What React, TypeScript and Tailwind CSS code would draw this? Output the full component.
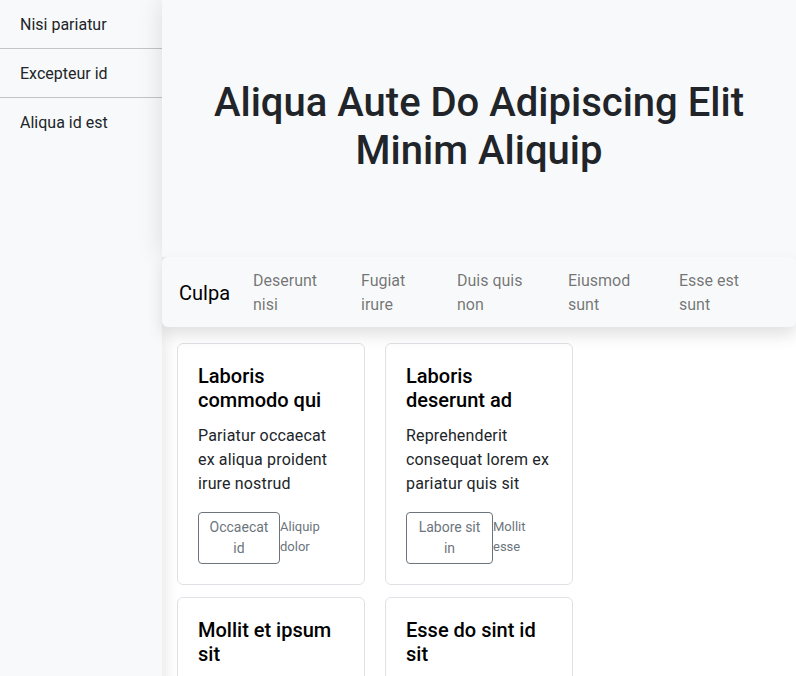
import { useState } from 'react'

const sideLinks = ['Nisi pariatur', 'Excepteur id', 'Aliqua id est']

const navLinks = [
  { label: 'Deserunt nisi', w: 'w-[108px]' },
  { label: 'Fugiat irure', w: 'w-[96px]' },
  { label: 'Duis quis non', w: 'w-[111px]' },
  { label: 'Eiusmod sunt', w: 'w-[111px]' },
  { label: 'Esse est sunt', w: 'w-[111px]' },
]

const cards = [
  {
    title: 'Laboris commodo qui',
    text: 'Pariatur occaecat ex aliqua proident irure nostrud',
    button: 'Occaecat id',
    bw: 'w-[82px]',
    link: 'Aliquip dolor',
  },
  {
    title: 'Laboris deserunt ad',
    text: 'Reprehenderit consequat lorem ex pariatur quis sit',
    button: 'Labore sit in',
    bw: 'w-[87px]',
    link: 'Mollit esse',
  },
  {
    title: 'Mollit et ipsum sit',
    text: 'Cillum velit nulla dolor magna minim elit',
    button: 'Velit anim',
    bw: 'w-[82px]',
    link: 'Ut enim',
  },
  {
    title: 'Esse do sint id sit',
    text: 'Ipsum culpa officia nisi tempor ad enim',
    button: 'Dolor sunt',
    bw: 'w-[82px]',
    link: 'Irure ea',
  },
]

export default function App() {
  const [active, setActive] = useState(0)

  return (
    <div className="flex min-h-screen bg-white font-['Roboto',sans-serif] text-[#212529]">
      {/* Sidebar */}
      <aside className="relative z-10 w-[162px] shrink-0 bg-[#f8f9fa] shadow-[4px_0_14px_rgba(0,0,0,0.09)]">
        {sideLinks.map((item, i) => (
          <div
            key={item}
            onClick={() => setActive(i)}
            className={`cursor-pointer px-5 pt-[13px] pb-[11px] text-base leading-6 ${
              i < sideLinks.length - 1 ? 'border-b border-[#c4c4c4]' : ''
            } ${active === i ? 'text-[#212529]' : 'text-[#212529]'}`}
          >
            {item}
          </div>
        ))}
      </aside>

      <main className="flex min-w-0 flex-1 flex-col">
        {/* Hero */}
        <header className="relative z-20 flex h-[257px] items-center justify-center bg-[#f8f9fa] px-[37px] pb-[4px] shadow-[0_0_24px_rgba(0,0,0,0.12)]">
          <h1 className="text-center text-[40px] font-medium leading-[48px] text-[#212529]">
            Aliqua Aute Do Adipiscing Elit Minim Aliquip
          </h1>
        </header>

        {/* Navbar */}
        <nav className="relative z-20 flex items-center rounded-md bg-[#f8f9fa] pt-[12px] pb-[10px] pl-[17px] shadow-[0_8px_16px_rgba(0,0,0,0.12)]">
          <span className="mr-4 w-[50px] text-xl leading-6 text-black">Culpa</span>
          <ul className="flex">
            {navLinks.map((n) => (
              <li key={n.label} className={`${n.w} px-2 text-base leading-6 text-black/55`}>
                {n.label}
              </li>
            ))}
          </ul>
        </nav>

        {/* Cards */}
        <section className="grid grid-cols-[188px_188px] gap-x-5 gap-y-3 pl-[15px] pt-4 pb-8">
          {cards.map((c) => (
            <div key={c.title} className="rounded-md border border-[#dee2e6] bg-white p-5">
              <h5 className="mb-3 text-xl font-medium leading-6 text-black">{c.title}</h5>
              <p className="mb-4 text-base leading-6 tracking-[0.01em] text-[#212529]">{c.text}</p>
              <div className="flex items-start">
                <button
                  className={`${c.bw} shrink-0 rounded border border-[#6c757d] px-2 py-1 text-center text-sm leading-[21px] text-[#6c757d]`}
                >
                  {c.button}
                </button>
                <a className="pt-[5px] text-[13px] leading-5 text-[#6c757d]">{c.link}</a>
              </div>
            </div>
          ))}
        </section>
      </main>
    </div>
  )
}
